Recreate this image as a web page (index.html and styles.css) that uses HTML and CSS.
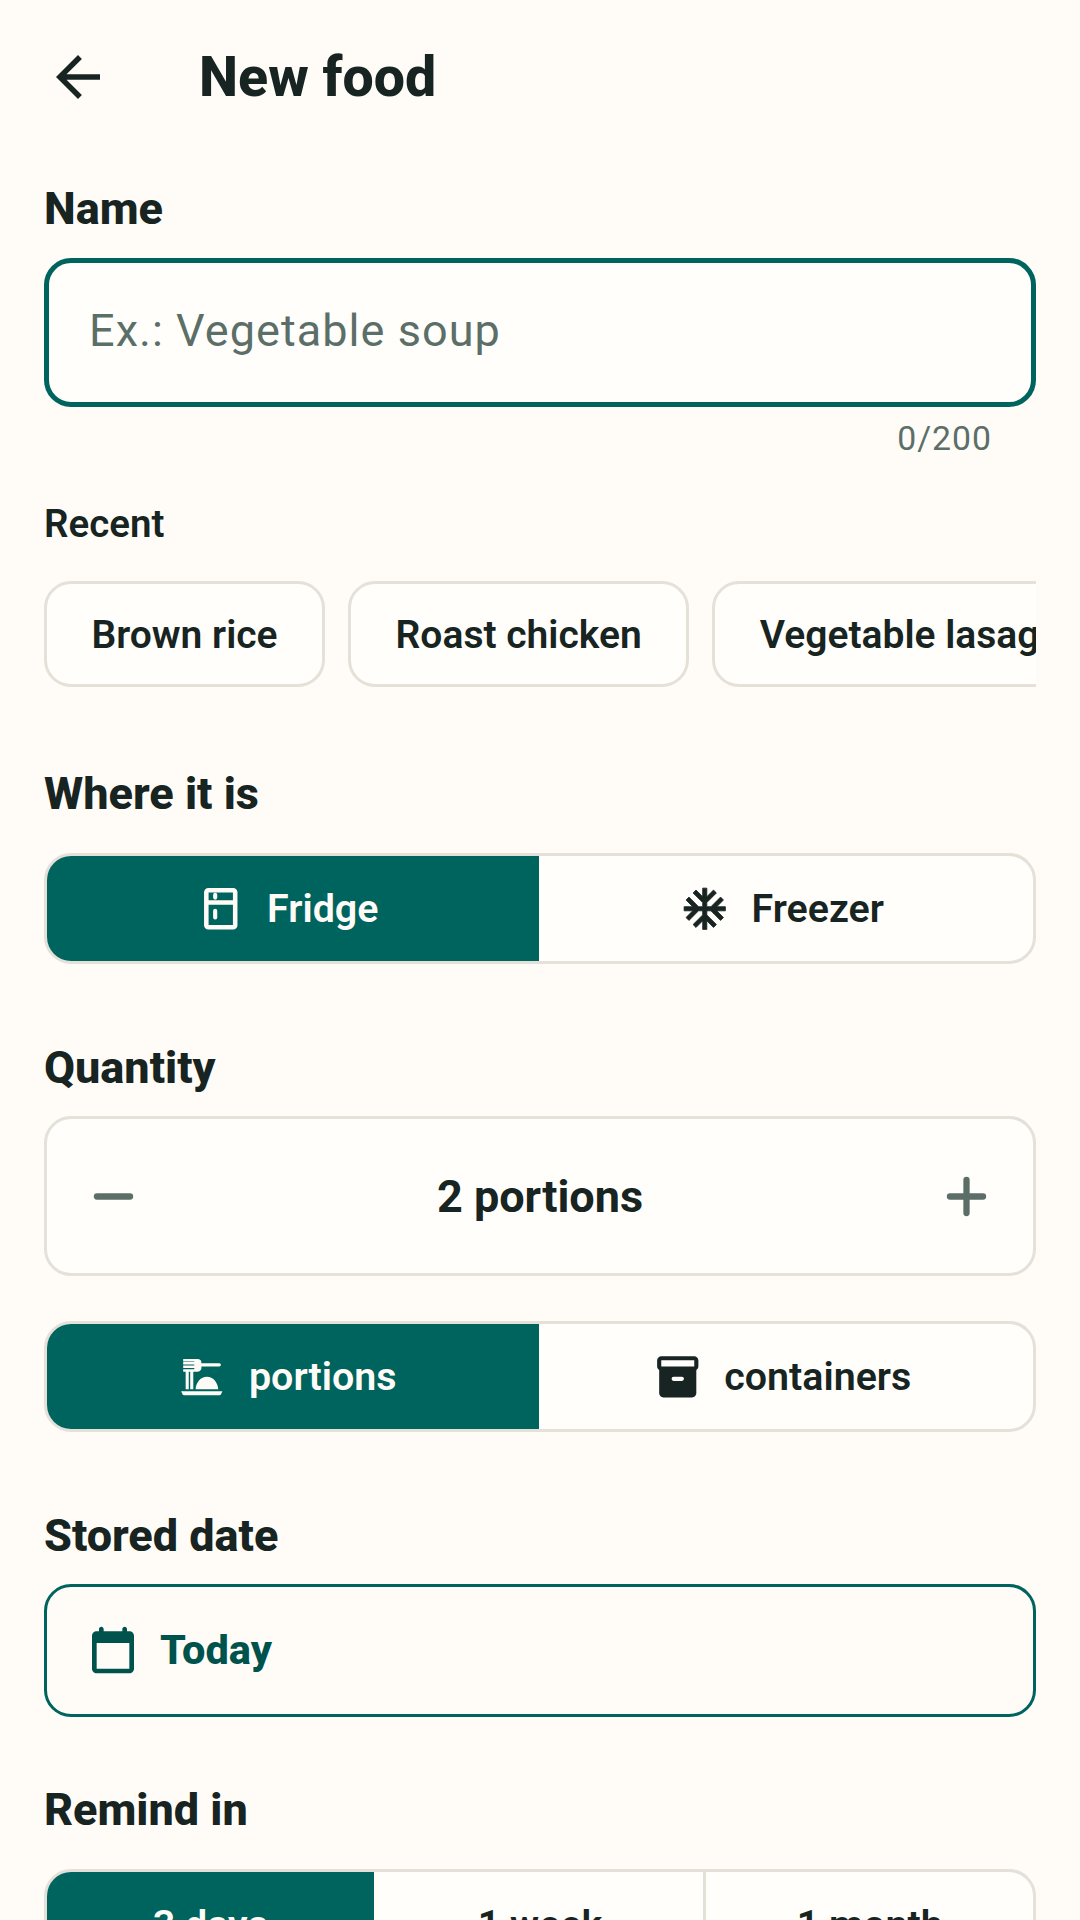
FILE: index.html
```html
<!DOCTYPE html>
<html lang="en">
<head>
    <meta charset="UTF-8">
    <meta name="viewport" content="width=device-width, initial-scale=1.0">
    <title>New food</title>
    <link rel="stylesheet" href="styles.css">
</head>
<body>
    <div class="screen">
        <!-- Top bar -->
        <header class="top-bar">
            <svg class="back-icon" viewBox="0 0 24 24"><path d="M20 11H7.83l5.59-5.59L12 4l-8 8 8 8 1.41-1.41L7.83 13H20z"/></svg>
            <h1>New food</h1>
        </header>

        <main class="form">
            <!-- Name -->
            <h2 class="label label-name">Name</h2>
            <div class="name-input">Ex.: Vegetable soup</div>
            <div class="counter">0/200</div>

            <h3 class="recent-title">Recent</h3>
            <div class="chips">
                <div class="chip">Brown rice</div>
                <div class="chip">Roast chicken</div>
                <div class="chip">Vegetable lasagna</div>
            </div>

            <!-- Where it is -->
            <h2 class="label label-where">Where it is</h2>
            <div class="segments">
                <div class="segment has-icon active">
                    <svg class="seg-icon" viewBox="0 0 24 24"><path class="line" d="M6 3h12a1 1 0 0 1 1 1v16a1 1 0 0 1-1 1H6a1 1 0 0 1-1-1V4a1 1 0 0 1 1-1zM5 9h14"/><path class="line thin" d="M9.3 5.2v1.4M9.3 13v3.2"/></svg>
                    <span>Fridge</span>
                </div>
                <div class="segment has-icon">
                    <svg class="seg-icon snow" viewBox="0 0 24 24"><path d="M22 11h-4.17l3.24-3.24-1.41-1.42L15 11h-2V9l4.66-4.66-1.42-1.41L13 6.17V2h-2v4.17L7.76 2.93 6.34 4.34 11 9v2H9L4.34 6.34 2.93 7.76 6.17 11H2v2h4.17l-3.24 3.24 1.41 1.42L9 13h2v2l-4.66 4.66 1.42 1.41L11 17.83V22h2v-4.17l3.24 3.24 1.42-1.41L13 15v-2h2l4.66 4.66 1.41-1.42L17.83 13H22z"/></svg>
                    <span>Freezer</span>
                </div>
            </div>

            <!-- Quantity -->
            <h2 class="label label-quantity">Quantity</h2>
            <div class="stepper">
                <svg class="step-icon" viewBox="0 0 24 24"><path d="M5.7 12h12.6"/></svg>
                <span class="step-value">2 portions</span>
                <svg class="step-icon" viewBox="0 0 24 24"><path d="M5.7 12h12.6M12 5.7v12.6"/></svg>
            </div>
            <div class="segments segments-unit">
                <div class="segment has-icon active">
                    <svg class="seg-icon" viewBox="0 0 24 24"><path d="M2 19h20l-.6 1.4a1 1 0 0 1-.9.6h-17a1 1 0 0 1-.9-.6zM9 18c.3-3.4 2.5-6 5.5-6s5.2 2.6 5.5 6z"/><path d="M4.2 9h1.5v9H4.2zM6.4 9h1.5v9H6.4z"/><path d="M3 3.4h7.2a1.8 1.8 0 0 1 1.6 2h8.7a.8.8 0 0 1 0 1.6h-8.7a2 2 0 0 1-1.8 2.6H3V8.4h5.4v-.6H3V6.6h5.4V6H3V4.8h5.4v-.2H3z"/></svg>
                    <span>portions</span>
                </div>
                <div class="segment has-icon">
                    <svg class="seg-icon" viewBox="0 0 24 24"><path d="M20 2H4c-1 0-2 .9-2 2v3.01c0 .72.43 1.34 1 1.69V20c0 1.1 1.1 2 2 2h14c.9 0 2-.9 2-2V8.7c.57-.35 1-.97 1-1.69V4c0-1.1-1-2-2-2zm-6 12h-4a1 1 0 0 1 0-2h4a1 1 0 0 1 0 2zm6-7H4V4h16v3z"/></svg>
                    <span>containers</span>
                </div>
            </div>

            <!-- Stored date -->
            <h2 class="label label-stored">Stored date</h2>
            <div class="date-field">
                <svg class="date-icon" viewBox="0 0 24 24"><path d="M19 4h-1V3c0-.55-.45-1-1-1s-1 .45-1 1v1H8V3c0-.55-.45-1-1-1s-1 .45-1 1v1H5c-1.1 0-2 .9-2 2v14c0 1.1.9 2 2 2h14c1.1 0 2-.9 2-2V6c0-1.1-.9-2-2-2zm0 16H5V9h14v11z"/></svg>
                <span>Today</span>
            </div>

            <!-- Remind in -->
            <h2 class="label label-remind">Remind in</h2>
            <div class="segments">
                <div class="segment active"><span>3 days</span></div>
                <div class="segment"><span>1 week</span></div>
                <div class="segment"><span>1 month</span></div>
            </div>
        </main>
    </div>
</body>
</html>
```

FILE: styles.css
```css
/* General Styles */
body {
    margin: 0;
    padding: 0;
    background-color: #fffcf8;
    color: #172421;
    font-family: Roboto, "Noto Sans", sans-serif;
}

.screen {
    width: 1080px;
    height: 1920px;
    overflow: hidden;
}

h1, h2, h3 {
    margin: 0;
}

/* Top bar */
.top-bar {
    display: flex;
    align-items: center;
    height: 154px;
    padding-left: 45px;
}

.back-icon {
    width: 66px;
    height: 66px;
    fill: #172421;
    flex: none;
}

.top-bar h1 {
    margin: 2px 0 0 88px;
    font-size: 55.5px;
    line-height: 64px;
    font-weight: 800;
}

.form {
    padding: 0 44px;
}

.label {
    font-size: 45px;
    line-height: 48px;
    font-weight: 800;
}

.label-name {
    margin-top: 31px;
    margin-bottom: 25px;
}

.label-where {
    margin-top: 83px;
    margin-bottom: 35px;
}

.label-quantity {
    margin-top: 80px;
    margin-bottom: 24px;
}

.label-stored {
    margin-top: 80px;
    margin-bottom: 24px;
}

.label-remind {
    margin-top: 69px;
    margin-bottom: 35px;
}

/* Name input */
.name-input {
    box-sizing: border-box;
    height: 149px;
    padding-left: 40px;
    border: 5px solid #00645e;
    border-radius: 27px;
    background: #fffefb;
    color: #5c6e68;
    font-size: 45px;
    letter-spacing: 1.05px;
    line-height: 135px;
}

.counter {
    margin-top: 11px;
    padding-right: 44px;
    color: #5c6e68;
    font-size: 33.75px;
    line-height: 42px;
    letter-spacing: 1px;
    text-align: right;
}

.recent-title {
    margin-top: 42px;
    font-size: 38.5px;
    line-height: 44px;
    font-weight: 600;
}

.chips {
    display: flex;
    gap: 23px;
    margin-top: 35px;
    overflow: hidden;
}

.chip {
    flex: none;
    box-sizing: border-box;
    height: 106px;
    padding: 0 44.5px;
    border: 3px solid #e5e0d8;
    border-radius: 27px;
    background: #fffefb;
    font-size: 39px;
    font-weight: 600;
    line-height: 102px;
    white-space: nowrap;
}

/* Segmented buttons */
.segments {
    display: flex;
    box-sizing: border-box;
    height: 111px;
    border: 3px solid #e5e0d8;
    border-radius: 27px;
    background: #fffefb;
    overflow: hidden;
}

.segments-unit {
    margin-top: 45px;
}

.segment {
    flex: 1;
    display: flex;
    align-items: center;
    justify-content: center;
    gap: 22px;
    font-size: 39.4px;
    font-weight: 600;
}

.segment.has-icon {
    box-sizing: border-box;
    padding-right: 12px;
}

.segment + .segment {
    border-left: 3px solid #e5e0d8;
}

.segment.has-icon + .segment.has-icon {
    padding-right: 11px;
}

.segment.active {
    background: #00645e;
    color: #fffcf8;
}

.segment.active + .segment {
    border-left-color: #fffefb;
}

.seg-icon {
    width: 49.5px;
    height: 49.5px;
    fill: currentColor;
    flex: none;
}

.snow {
    stroke: currentColor;
    stroke-width: 0.4;
    stroke-linejoin: round;
}

.line {
    fill: none;
    stroke: currentColor;
    stroke-width: 2.2;
    stroke-linecap: round;
    stroke-linejoin: round;
}

.line.thin {
    stroke-width: 2;
}

/* Quantity stepper */
.stepper {
    display: flex;
    align-items: center;
    justify-content: space-between;
    box-sizing: border-box;
    height: 160px;
    padding: 0 34.5px;
    border: 3px solid #e5e0d8;
    border-radius: 27px;
    background: #fffefb;
}

.step-icon {
    width: 63px;
    height: 63px;
    fill: none;
    stroke: #5c6e68;
    stroke-width: 2.4;
    stroke-linecap: round;
}

.step-value {
    font-size: 45px;
    font-weight: 700;
}

/* Stored date */
.date-field {
    display: flex;
    align-items: center;
    gap: 19px;
    box-sizing: border-box;
    height: 133px;
    padding: 0 0 2px 38px;
    border: 3px solid #00645e;
    border-radius: 27px;
    color: #00524d;
    font-size: 41.5px;
    font-weight: 800;
}

.date-icon {
    width: 56px;
    height: 56px;
    fill: currentColor;
    flex: none;
}
```
